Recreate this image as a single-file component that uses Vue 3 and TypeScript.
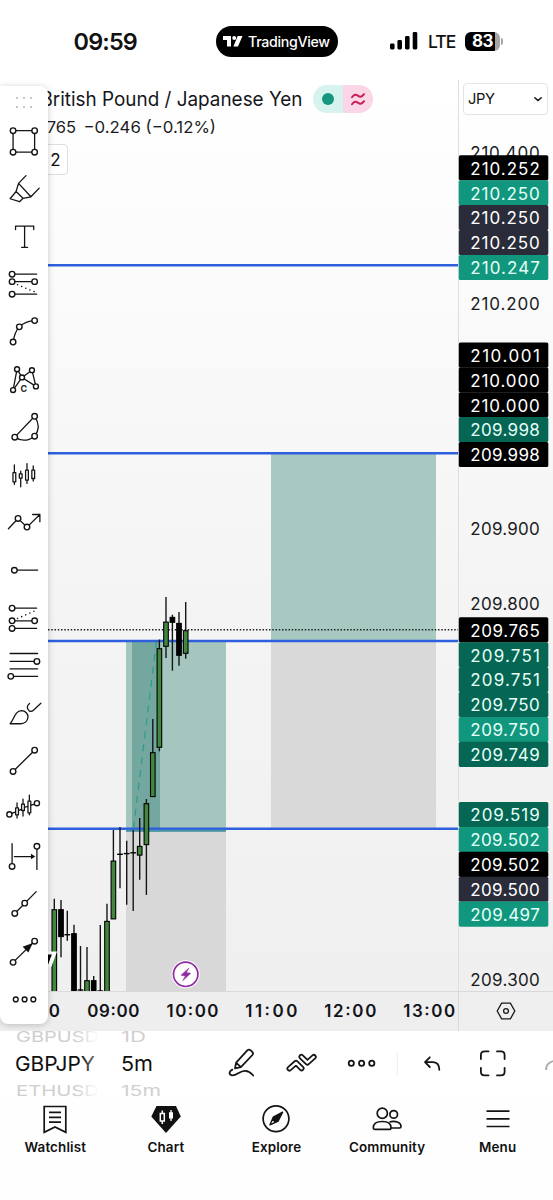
<script setup lang="ts">
type Tone = 'black' | 'teal' | 'deep' | 'slate'
interface Tag { value: string; tone: Tone }
interface TagStack { top: number; tags: Tag[] }
interface Candle { x: number; high: number; low: number; open: number; close: number; kind: 'up' | 'down' | 'doji' }
interface Tool { name: string; path?: string; dots?: number[][]; dotted?: string; fill?: string; letter?: boolean; r?: number }

const tick = (value: string, y: number) => ({ value, y })
const ticks = [tick('210.400', 152), tick('210.200', 303), tick('209.900', 528), tick('209.800', 603.5), tick('209.300', 979)]

const stacks: TagStack[] = [
  { top: 155.3, tags: [
    { value: '210.252', tone: 'black' }, { value: '210.250', tone: 'teal' }, { value: '210.250', tone: 'slate' },
    { value: '210.250', tone: 'slate' }, { value: '210.247', tone: 'teal' } ] },
  { top: 342.4, tags: [
    { value: '210.001', tone: 'black' }, { value: '210.000', tone: 'black' }, { value: '210.000', tone: 'black' },
    { value: '209.998', tone: 'deep' }, { value: '209.998', tone: 'black' } ] },
  { top: 617.3, tags: [
    { value: '209.765', tone: 'black' }, { value: '209.751', tone: 'deep' }, { value: '209.751', tone: 'deep' },
    { value: '209.750', tone: 'deep' }, { value: '209.750', tone: 'teal' }, { value: '209.749', tone: 'deep' } ] },
  { top: 802, tags: [
    { value: '209.519', tone: 'deep' }, { value: '209.502', tone: 'teal' }, { value: '209.502', tone: 'black' },
    { value: '209.500', tone: 'slate' }, { value: '209.497', tone: 'teal' } ] },
]
const tagHeight = 24.9

const c = (x: number, high: number, low: number, open: number, close: number, kind: Candle['kind']): Candle => ({ x, high, low, open, close, kind })
const candles: Candle[] = [
  c(54.3, 898.7, 991, 909.3, 992, 'up'),
  c(61, 900, 957.3, 909.3, 937, 'down'),
  c(67.3, 910.7, 940.7, 934.7, 934.7, 'doji'),
  c(74, 924.7, 991, 933.3, 992, 'down'),
  c(80.5, 946, 991, 990, 990, 'doji'),
  c(87, 947, 991, 980.3, 992, 'up'),
  c(93.7, 976, 991, 980.3, 992, 'down'),
  c(100.3, 925, 991, 991, 991, 'doji'),
  c(107, 903.7, 991, 921, 992, 'up'),
  c(113.4, 830, 919, 860.7, 919.3, 'up'),
  c(120, 827, 888.3, 854.3, 854.3, 'doji'),
  c(126.7, 840.7, 904.7, 853.6, 853.6, 'doji'),
  c(133.2, 830, 911, 852.8, 852.8, 'doji'),
  c(139.7, 818, 879.7, 846, 855.5, 'up'),
  c(146.4, 799, 895, 803.3, 845, 'up'),
  c(152.8, 719, 797, 752.3, 797, 'up'),
  c(159.4, 639.5, 751.3, 648.3, 747.7, 'up'),
  c(166, 597, 658, 621.7, 646.7, 'up'),
  c(172.4, 614.7, 670.7, 617, 622.7, 'down'),
  c(179, 612, 665.7, 623, 655.7, 'down'),
  c(185.7, 602, 658.7, 630.3, 653.7, 'up'),
]

const levels = [265.2, 453.3, 641, 828.7]
const hours = [
  { label: '08:00', x: 34 }, { label: '09:00', x: 113.3 }, { label: '10:00', x: 192.5 },
  { label: '11:00', x: 271.3 }, { label: '12:00', x: 350.3 }, { label: '13:00', x: 429.2 },
]

const tools: Tool[] = [
  { name: 'Rectangle', path: 'M13 12.8H34.7V34.4H13Z', dots: [[13, 12.8], [34.7, 12.8], [13, 34.4], [34.7, 34.4]] },
  { name: 'Highlighter', path: 'M26 10.7L18.5 18.5L16 26.7L10 34L19.5 37L23 33.5L31 32L39.3 23.3M18.5 18.5L31 32M16 26.7L23 33.5' },
  { name: 'Text', path: 'M15.5 16.7V13.2H33.8V16.7M24.6 13.2V34.6M21.6 34.6H27.6' },
  { name: 'Flat top/bottom', path: 'M12 14.3H36.7M12 21.8H34.7M12 34.4H36.7', dots: [[12, 14.3], [12, 21.8], [34.7, 21.8], [12, 34.4]], dotted: 'M17.5 25L35 32.2' },
  { name: 'Curve', path: 'M13 34.3Q14.5 24 19.3 19Q25.5 13.2 34.7 12.7', dots: [[34.7, 12.7], [19.3, 19], [13, 34.3]] },
  { name: 'Cypher pattern', path: 'M13 34.3L17 13.3L22 21.6L36 30.6L32 14.3L22 21.6Z', dots: [[17, 13.3], [32, 14.3], [22, 21.6], [13, 34.3], [36, 30.6]], letter: true, r: 2.5 },
  { name: 'Sector', path: 'M14.7 34.4L34.7 13.4Q42 24 34.7 33.4Q24.5 41 14.7 34.4', dots: [[34.7, 13.4], [14.7, 34.4], [34.7, 33.4]] },
  { name: 'Bars pattern', path: 'M14.3 14V21.7M14.3 31V33.7M12.9 21.7h2.8v9.3h-2.8zM20.7 20.3V23M20.7 27.3V36M19.3 23h2.8v4.3h-2.8zM27 12.7V19.3M27 29.3V32.7M25.6 19.3h2.8v10h-2.8zM33.3 15V19.3M33.3 27.7V30.3M31.9 19.3h2.8v8.4h-2.8z' },
  { name: 'Path', path: 'M8.3 30L18 19.6L27 28.3L40 15.6M32.7 15.6H40V23', dots: [[18, 19.6], [27, 28.3]] },
  { name: 'Horizontal ray', path: 'M14.3 24.4H37.7', dots: [[14.3, 24.4]] },
  { name: 'Disjoint channel', path: 'M12 14.3H36.7M12 27H34.7M12 34.7H36.7', dots: [[12, 14.3], [12, 27], [34.7, 27], [12, 34.7]], dotted: 'M17.5 24.6L34.5 17.2' },
  { name: 'Fib retracement', path: 'M10 11.6H37.7M10 19.6H37M10 27H37.7M10.7 34.6H37.7', dots: [[37, 19.6], [10.7, 34.6]] },
  { name: 'Brush', path: 'M10 35C14 31 14.5 22 21.5 21.8C25.5 21.8 28.3 25.2 28 28.6C27.6 32 25 35 20.5 35ZM29.6 14.6C26.5 17 26.8 20 29.2 22C31 23 32.3 22.5 33.5 21.4L41 14.4' },
  { name: 'Trend line', path: 'M13 34.7L34.7 13.3', dots: [[13, 34.7], [34.7, 13.3]] },
  { name: 'Ghost feed', path: 'M9.3 29.6L15.6 27M18.4 25.8L21.6 24.3M24.4 22.5L28 21.4M31 20.5L37 18.3M17 18V23M17 30V33.3M15.6 23h2.8v7h-2.8zM23 14.3V19.3M23 25.7V31.3M21.6 19.3h2.8v6.4h-2.8zM29.4 10.3V16.3M29.4 28V30M28 16.3h2.8v11.7h-2.8z', dots: [[9.3, 29.6], [37, 18.3]], r: 2.6 },
  { name: 'Date range', path: 'M12 11.7V34.7M37 14.4V37.7M14.3 24.7H33', dots: [[12, 34.7], [37, 14.4]], fill: 'M31 21.9L35.4 24.7L31 27.5Z' },
  { name: 'Ray', path: 'M14.7 33.7L36.3 11.7', dots: [[14.7, 33.7], [24.7, 23.3]] },
  { name: 'Arrow', path: 'M13 34.6L34.7 13.3', dots: [[13, 34.6], [34.7, 13.3]], fill: 'M32.8 15.2L22.6 19L28.4 24.8Z' },
  { name: 'More', dots: [[15.7, 24.6], [24.6, 24.6], [33.4, 24.6]], r: 2.4 },
]
</script>

<template>
  <div class="screen">
    <header class="status">
      <span class="clock">09:59</span>
      <div class="island">
        <svg class="tv" width="20" height="11" viewBox="0 0 20 11"><path d="M0 0h8v10.5H4V4H0zM14.7 0H19.5L15 10.5H10.4z" /><circle cx="11.2" cy="2" r="2" /></svg>
        <span>TradingView</span>
      </div>
      <div class="signals">
        <svg width="28" height="18" viewBox="0 0 28 18"><rect x="0" y="11.5" width="4.6" height="6" rx="1.4" /><rect x="7.4" y="8" width="4.6" height="9.5" rx="1.4" /><rect x="15" y="4" width="4.6" height="13.5" rx="1.4" /><rect x="22.7" y="0" width="4.6" height="17.5" rx="1.4" /></svg>
        <span class="lte">LTE</span>
        <div class="battery"><span>83</span><i></i></div>
      </div>
    </header>

    <main class="chart">
      <svg class="plot" width="458" height="911" viewBox="0 80 458 911">
        <rect x="271" y="453" width="165" height="188" fill="#a7c9c2" />
        <rect x="271" y="641" width="165" height="188" fill="#d9d9d9" />
        <rect x="126" y="831" width="100" height="160" fill="#d8d8d8" />
        <rect x="126" y="641" width="100" height="190.5" fill="#a5c6bf" />
        <rect x="132" y="641" width="28" height="190.5" fill="#74a79f" />
        <path d="M156.5 641L133.5 828" stroke="#2a9d86" stroke-width="1.2" stroke-dasharray="7 6" fill="none" />
        <path d="M48 629.8H458" stroke="#222" stroke-width="1.5" stroke-dasharray="1.5 1.75" />
        <path v-for="y in levels" :key="y" :d="`M48 ${y}H458`" stroke="#2e5fdc" stroke-width="2.4" />
        <rect x="126" y="829.8" width="100" height="2" fill="#4b94a5" />
        <g v-for="k in candles" :key="k.x">
          <path :d="`M${k.x} ${k.high}V${k.low}`" stroke="#161616" stroke-width="1.4" />
          <path v-if="k.kind === 'doji'" :d="`M${k.x - 2.9} ${k.open}h5.8`" stroke="#000" stroke-width="1.4" />
          <rect v-else :x="k.x - 2.3" :y="k.open + 0.4" width="4.6" :height="k.close - k.open - 0.8" :fill="k.kind === 'up' ? '#43873f' : '#000'" stroke="#000" stroke-width="1.1" />
        </g>
        <path d="M46 953.5H52L48 966H46Z" fill="#000" />
        <path d="M46 951.6H57L51.4 966.8H47.4L52 954.6H46Z" fill="#fff" />
        <g transform="translate(185.7 974.3)">
          <circle r="14" fill="#fff" /><circle r="12.2" fill="#fff" stroke="#8e2ba0" stroke-width="1.7" />
          <path d="M3.3 -6.3L-4.8 .9L-.3 1.7L-3 6.5L5 -1L.6 -1.8Z" fill="#8e2ba0" stroke="#8e2ba0" stroke-width=".5" />
        </g>
      </svg>

      <svg class="prices" width="95" height="911" viewBox="458 80 95 911">
        <text v-for="t in ticks" :key="t.value" class="price" x="470.3" :y="t.y + 6.5" textLength="69.5">{{ t.value }}</text>
        <g v-for="s in stacks" :key="s.top">
          <g v-for="(t, i) in s.tags" :key="i" :class="t.tone">
            <rect x="458.8" :y="s.top + i * tagHeight" width="89.5" height="25.1" rx="1.6" />
            <text class="price" x="470.3" :y="s.top + i * tagHeight + 19.3" textLength="69.5">{{ t.value }}</text>
          </g>
        </g>
      </svg>

      <svg class="hours" width="458" height="40" viewBox="0 991 458 40">
        <text v-for="h in hours" :key="h.label" :x="h.x - 26" y="1017.4" textLength="52">{{ h.label }}</text>
      </svg>
      <div class="gear">
        <svg width="20" height="18" viewBox="0 0 20 18"><path d="M5.6 1.2H14.4L18.8 9L14.4 16.8H5.6L1.2 9Z" /><circle cx="10" cy="9" r="2.4" /></svg>
      </div>

      <section class="legend">
        <div class="symbol">
          <svg width="303" height="28" viewBox="0 0 303 28"><text x="40.5" y="21.4" textLength="262" lengthAdjust="spacingAndGlyphs">British Pound / Japanese Yen</text></svg>
          <div class="pill">
            <b><i></i></b>
            <b class="pink"><svg width="14" height="13" viewBox="0 0 14 13"><path d="M1 4.2C3.5 .6 5.3 1.5 7 2.8S10.5 4.7 13 1.2M1 11.2C3.5 7.6 5.3 8.5 7 9.8S10.5 11.7 13 8.2" /></svg></b>
          </div>
        </div>
        <svg class="delta" width="220" height="24" viewBox="0 0 220 24"><text x="76" y="17.4" text-anchor="end">209.765</text><text x="83.5" y="17.4" textLength="132.5" lengthAdjust="spacingAndGlyphs">−0.246 (−0.12%)</text></svg>
        <div class="count">2</div>
      </section>

      <div class="currency"><span>JPY</span><svg width="10" height="7" viewBox="0 0 10 7"><path d="M1.8 1.8L5 4.6L8.2 1.8" /></svg></div>

      <aside class="tools">
        <div class="grip"><i v-for="n in 6" :key="n"></i></div>
        <svg v-for="t in tools" :key="t.name" class="tool" viewBox="0 0 48 48" :aria-label="t.name">
          <path v-if="t.path" :d="t.path" class="stroke" />
          <path v-if="t.dotted" :d="t.dotted" class="dotted" />
          <path v-if="t.fill" :d="t.fill" class="solid" />
          <circle v-for="(d, i) in t.dots" :key="i" :cx="d[0]" :cy="d[1]" :r="t.r ?? 2.8" class="node" />
          <text v-if="t.letter" x="20.4" y="36.5">C</text>
        </svg>
      </aside>
    </main>

    <div class="toolbar">
      <svg class="wheel" width="106" height="66" viewBox="0 0 106 66">
        <defs>
          <linearGradient id="fade" gradientUnits="userSpaceOnUse" x1="80" y1="0" x2="98" y2="0"><stop offset="0" stop-color="#111" /><stop offset="1" stop-color="#888" /></linearGradient>
          <linearGradient id="fadeLight" gradientUnits="userSpaceOnUse" x1="60" y1="0" x2="81" y2="0"><stop offset="0" stop-color="#cfcfcf" /><stop offset="1" stop-color="#fafafa" /></linearGradient>
        </defs>
        <text transform="translate(16 11) scale(1 .74)" textLength="83" lengthAdjust="spacingAndGlyphs" fill="url(#fadeLight)">GBPUSD</text>
        <text x="15" y="40.3" textLength="80" lengthAdjust="spacingAndGlyphs" fill="url(#fade)">GBPJPY</text>
        <text transform="translate(16 65) scale(1 .74)" textLength="83" lengthAdjust="spacingAndGlyphs" fill="url(#fadeLight)">ETHUSD</text>
      </svg>
      <svg class="wheel" width="64" height="66" viewBox="106 0 64 66">
        <text transform="translate(121 11) scale(1 .74)" textLength="25" lengthAdjust="spacingAndGlyphs" fill="#d0d0d0">1D</text>
        <text x="121" y="40.3" textLength="32" lengthAdjust="spacingAndGlyphs" fill="#111">5m</text>
        <text transform="translate(121 65) scale(1 .74)" textLength="40" lengthAdjust="spacingAndGlyphs" fill="#d0d0d0">15m</text>
      </svg>
      <svg width="383" height="66" viewBox="170 1031 383 66">
        <g class="ink">
          <path d="M235 1068.3L236.1 1062.7L247.3 1050.4Q248.8 1049 250.4 1050.2L252 1051.7Q253.8 1053.3 252.4 1055L240.9 1067.1ZM236.1 1062.7L240.9 1067.1" />
          <path d="M232.4 1069.6C229.2 1071 228.4 1074.4 231.8 1075.3C236.6 1076 239.500 1070.7 245.2 1070.9C250 1071.200 251.300 1073.400 253.200 1075.500" />
          <path class="chevron" d="M289.4 1068.6L296 1062.8L301.6 1068.4M301.4 1056.8L307.4 1062.6L313.800 1056.900" />
          <path class="chevron-core" d="M289.4 1068.6L296 1062.8L301.6 1068.4M301.4 1056.8L307.4 1062.6L313.800 1056.900" />
          <circle cx="351.3" cy="1063.3" r="2.6" /><circle cx="361.6" cy="1063.3" r="2.6" /><circle cx="371.8" cy="1063.3" r="2.6" />
          <path d="M429.8 1057.3L425 1062.2L429.8 1067M425.4 1062.2H433Q439.3 1062.6 439.3 1069.8" />
          <path d="M480.9 1059V1055Q480.9 1051.4 484.5 1051.4H488.5M497 1051.4H501Q504.6 1051.4 504.6 1055V1059M504.6 1067.8V1071.8Q504.6 1075.4 501 1075.4H497M488.5 1075.4H484.5Q480.9 1075.4 480.9 1071.8V1067.8" />
        </g>
        <path d="M397.3 1052V1075" stroke="#ececec" />
        <path d="M546 1070Q546 1063 553 1061" stroke="#aaa" stroke-width="1.8" fill="none" />
      </svg>
    </div>

    <nav class="tabs">
      <a><svg width="30" height="30" viewBox="0 0 30 30"><path class="line" d="M4.2 2.5H25.8V28.3L15 23L4.2 28.3ZM9 8.4H21M9 13.3H21M9 18.2H21" /></svg><span>Watchlist</span></a>
      <a><svg width="30" height="30" viewBox="0 0 30 30"><path d="M5.5 2H25L29.8 12.5L15 29L.3 12.5Z" fill="#111" /><path d="M9.3 9.5h4v7.5h-4zM11.3 6.5v3M11.3 17v3" stroke="#fff" stroke-width="1.5" fill="none" /><path d="M18 8.2h4v6.3h-4zM19.4 6h1.3v11h-1.3z" fill="#fff" /></svg><span>Chart</span></a>
      <a><svg width="30" height="30" viewBox="0 0 30 30"><circle class="line" cx="15" cy="14.8" r="12.9" /><path class="needle" d="M21.6 8.2L12.2 13.2L9 20.8L17.2 17Z" /><path d="M21.6 8.2L12.2 13.2L10.6 17L12.8 17.2L13.4 18.8L17.2 17Z" fill="#111" /></svg><span>Explore</span></a>
      <a><svg width="30" height="30" viewBox="0 0 30 30"><g class="line"><circle cx="10.3" cy="9.3" r="5.1" /><circle cx="21.7" cy="10.4" r="3.8" /><path d="M1.3 23.7C1.3 18.5 5.5 17.5 10.3 17.5S19 18.5 19 23.7Q19 25.4 17.3 25.4H3Q1.3 25.4 1.3 23.7ZM17.5 18C23 16.4 29 18.3 29 22.5Q29 24 27.5 24H19" /></g></svg><span>Community</span></a>
      <a><svg width="30" height="30" viewBox="0 0 30 30"><path class="line" d="M3.5 7.2H26.5M3.5 14.8H26.5M3.5 22.5H26.5" /></svg><span>Menu</span></a>
    </nav>
  </div>
</template>

<style>
body { margin: 0; background: #fff; }
</style>

<style scoped>
.screen { width: 553px; height: 1200px; overflow: hidden; display: flex; flex-direction: column; background: #fff; color: #111; font-family: Inter, "Liberation Sans", sans-serif; }
svg { display: block; flex: none; }
.status { height: 80px; box-sizing: border-box; padding: 26px 50px 0 73.5px; display: flex; align-items: flex-start; }
.clock { width: 142px; font-size: 23.4px; font-weight: 600; line-height: 31px; letter-spacing: -.8px; }
.island { width: 122px; height: 30.5px; border-radius: 16px; background: #000; color: #fff; display: flex; align-items: center; gap: 5px; padding-left: 7.5px; box-sizing: border-box; font-size: 14.2px; font-weight: 500; letter-spacing: -.3px; }
.tv { fill: #fff; }
.signals { display: flex; align-items: center; height: 30px; margin-left: 52.5px; }
.lte { font-size: 17.5px; margin-left: 10px; width: 37px; letter-spacing: -1px; font-weight: 500; }
.battery { position: relative; width: 35px; height: 19px; border-radius: 6px; background: linear-gradient(90deg, #000 30px, #a6a6a6 30px); display: flex; align-items: center; justify-content: center; color: #fff; font-weight: 700; font-size: 17px; letter-spacing: -.4px; }
.battery i { position: absolute; right: -3px; top: 6px; width: 2px; height: 7px; border-radius: 0 2px 2px 0; background: #a6a6a6; }
.chart { position: relative; flex: none; display: grid; grid-template-columns: 458px 95px; grid-template-rows: 911px 40px; background: linear-gradient(#fff, #fbfbfb 20%, #f4f4f4 55%, #efeff0); }
.prices { box-shadow: inset 1px 0 #dedee0; }
.price { font-size: 17px; fill: #1b1c22; }
.hours { font-size: 16.9px; font-weight: 600; fill: #121318; background: #eeeeef; box-shadow: inset 0 1px #d9d9db; }
.gear { background: #efeff0; box-shadow: inset 1px 1px #d9d9db; display: flex; align-items: center; justify-content: center; }
.gear svg { fill: none; stroke: #1a1a1a; stroke-width: 1.3; }
.black rect { fill: #000; } .teal rect { fill: #12977f; } .deep rect { fill: #066654; } .slate rect { fill: #2a2c3a; }
.black text, .slate text { fill: #fff; } .teal text, .deep text { fill: #e4fff8; }
.legend { position: absolute; left: 0; top: 5px; width: 380px; display: flex; flex-direction: column; align-items: flex-start; }
.symbol { display: flex; gap: 10px; font-size: 19.5px; fill: #15161c; }
.pill { display: flex; width: 60px; height: 28px; border-radius: 14px; overflow: hidden; }
.pill b { flex: 1; background: #d7f3ed; display: flex; align-items: center; justify-content: center; }
.pill b.pink { background: #fad6e6; }
.pill i { width: 12px; height: 12px; border-radius: 50%; background: #149680; }
.pill svg { fill: none; stroke: #c81e5a; stroke-width: 2; stroke-linecap: round; }
.delta { margin-top: 3px; font-size: 16.5px; fill: #1b1c22; }
.count { margin-top: 4px; width: 67.5px; height: 31px; box-sizing: border-box; border: 1px solid #dedede; border-radius: 4px; padding-right: 6px; text-align: right; font-size: 17px; line-height: 30px; background: #fff; }
.currency { position: absolute; left: 463px; top: 3px; width: 85px; height: 32px; box-sizing: border-box; border: 1px solid #e4e4e6; border-radius: 4px; background: #fff; display: flex; align-items: center; justify-content: space-between; padding: 0 4px; font-size: 14.7px; letter-spacing: -.4px; }
.currency svg { fill: none; stroke: #111; stroke-width: 1.5; stroke-linecap: round; }
.tools { position: absolute; left: 0; top: 6px; width: 48px; height: 938px; border-radius: 0 8px 8px 8px; background: #fff; box-shadow: 0 1px 6px rgba(0, 0, 0, .22); display: flex; flex-direction: column; }
.grip { height: 31.5px; flex: none; box-sizing: border-box; padding: 11px 16px 0; display: grid; grid-template-columns: repeat(3, 2px); grid-template-rows: repeat(2, 2px); justify-content: space-between; row-gap: 6.5px; }
.grip i { background: #b5b5b5; border-radius: 50%; }
.tool { width: 48px; height: 47.67px; }
.stroke { fill: none; stroke: #141414; stroke-width: 1.3; stroke-linejoin: round; stroke-linecap: round; }
.dotted { fill: none; stroke: #141414; stroke-width: 1.6; stroke-linecap: round; stroke-dasharray: 0 4.5; }
.solid { fill: #111; }
.node { fill: #fff; stroke: #141414; stroke-width: 1.4; }
.tool text { font-size: 9px; font-weight: 700; fill: #222; }
.toolbar { flex: none; height: 66px; display: flex; background: #fff; font-size: 20.5px; }
.wheel { overflow: hidden; }
.ink { fill: none; stroke: #151515; stroke-width: 1.8; stroke-linecap: round; stroke-linejoin: round; }
.chevron { stroke-width: 5.8; }
.chevron-core { stroke: #fff; stroke-width: 2.3; }
.tabs { flex: 1; display: grid; grid-template-columns: repeat(5, 1fr); background: #fefefe; padding-top: 6.5px; }
.tabs a { display: flex; flex-direction: column; align-items: center; font-size: 13.4px; font-weight: 600; line-height: 16px; letter-spacing: .15px; }
.tabs span { margin-top: 5px; }
.tabs .line { fill: none; stroke: #141414; stroke-width: 1.7; }
.needle { fill: none; stroke: #141414; stroke-width: 1.4; stroke-linejoin: round; }
</style>
